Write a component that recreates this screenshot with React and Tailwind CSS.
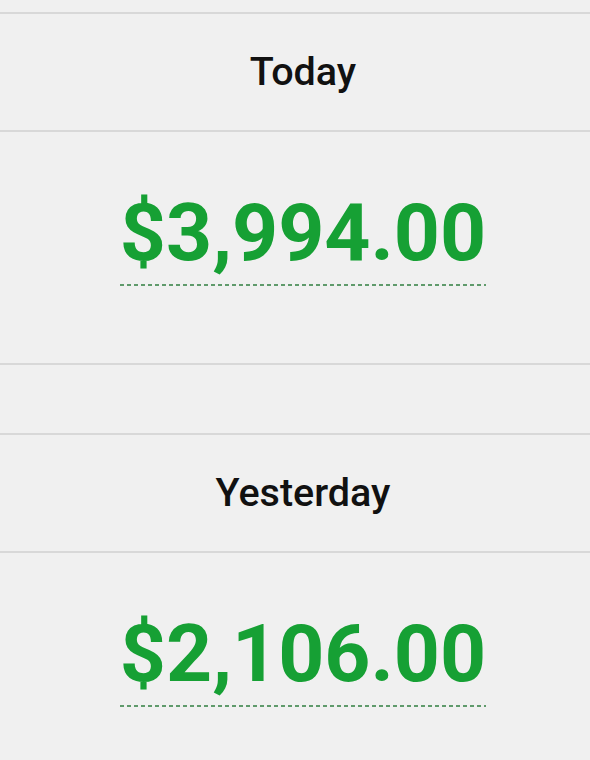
import React from "react";

function Header({ label }) {
  return (
    <div className="h-[118px] flex items-center justify-center pl-[16px] border-b-2 border-[#d8d8d8]">
      <span className="text-[39.5px] font-medium text-[#111111] leading-none">{label}</span>
    </div>
  );
}

function Amount({ value }) {
  return (
    <div className="h-[233px] flex flex-col items-center pl-[16px] pt-[61px] border-b-2 border-[#d8d8d8]">
      <div className="flex flex-col items-stretch">
        <span className="text-[80.5px] font-bold text-[#16a034] leading-none">{value}</span>
        <div className="mt-[10px] h-[2px] bg-[linear-gradient(to_right,#5f9a6b_4px,transparent_4px)] bg-[length:7px_2px] bg-repeat-x" />
      </div>
    </div>
  );
}

export default function App() {
  return (
    <div className="w-[590px] h-[760px] overflow-hidden bg-[#f0f0f0]" style={{ fontFamily: "Roboto, 'Liberation Sans', sans-serif" }}>
      <div className="h-[14px] border-b-2 border-[#d8d8d8]" />
      <Header label="Today" />
      <Amount value="$3,994.00" />
      <div className="h-[70px] border-b-2 border-[#d8d8d8]" />
      <Header label="Yesterday" />
      <Amount value="$2,106.00" />
    </div>
  );
}
